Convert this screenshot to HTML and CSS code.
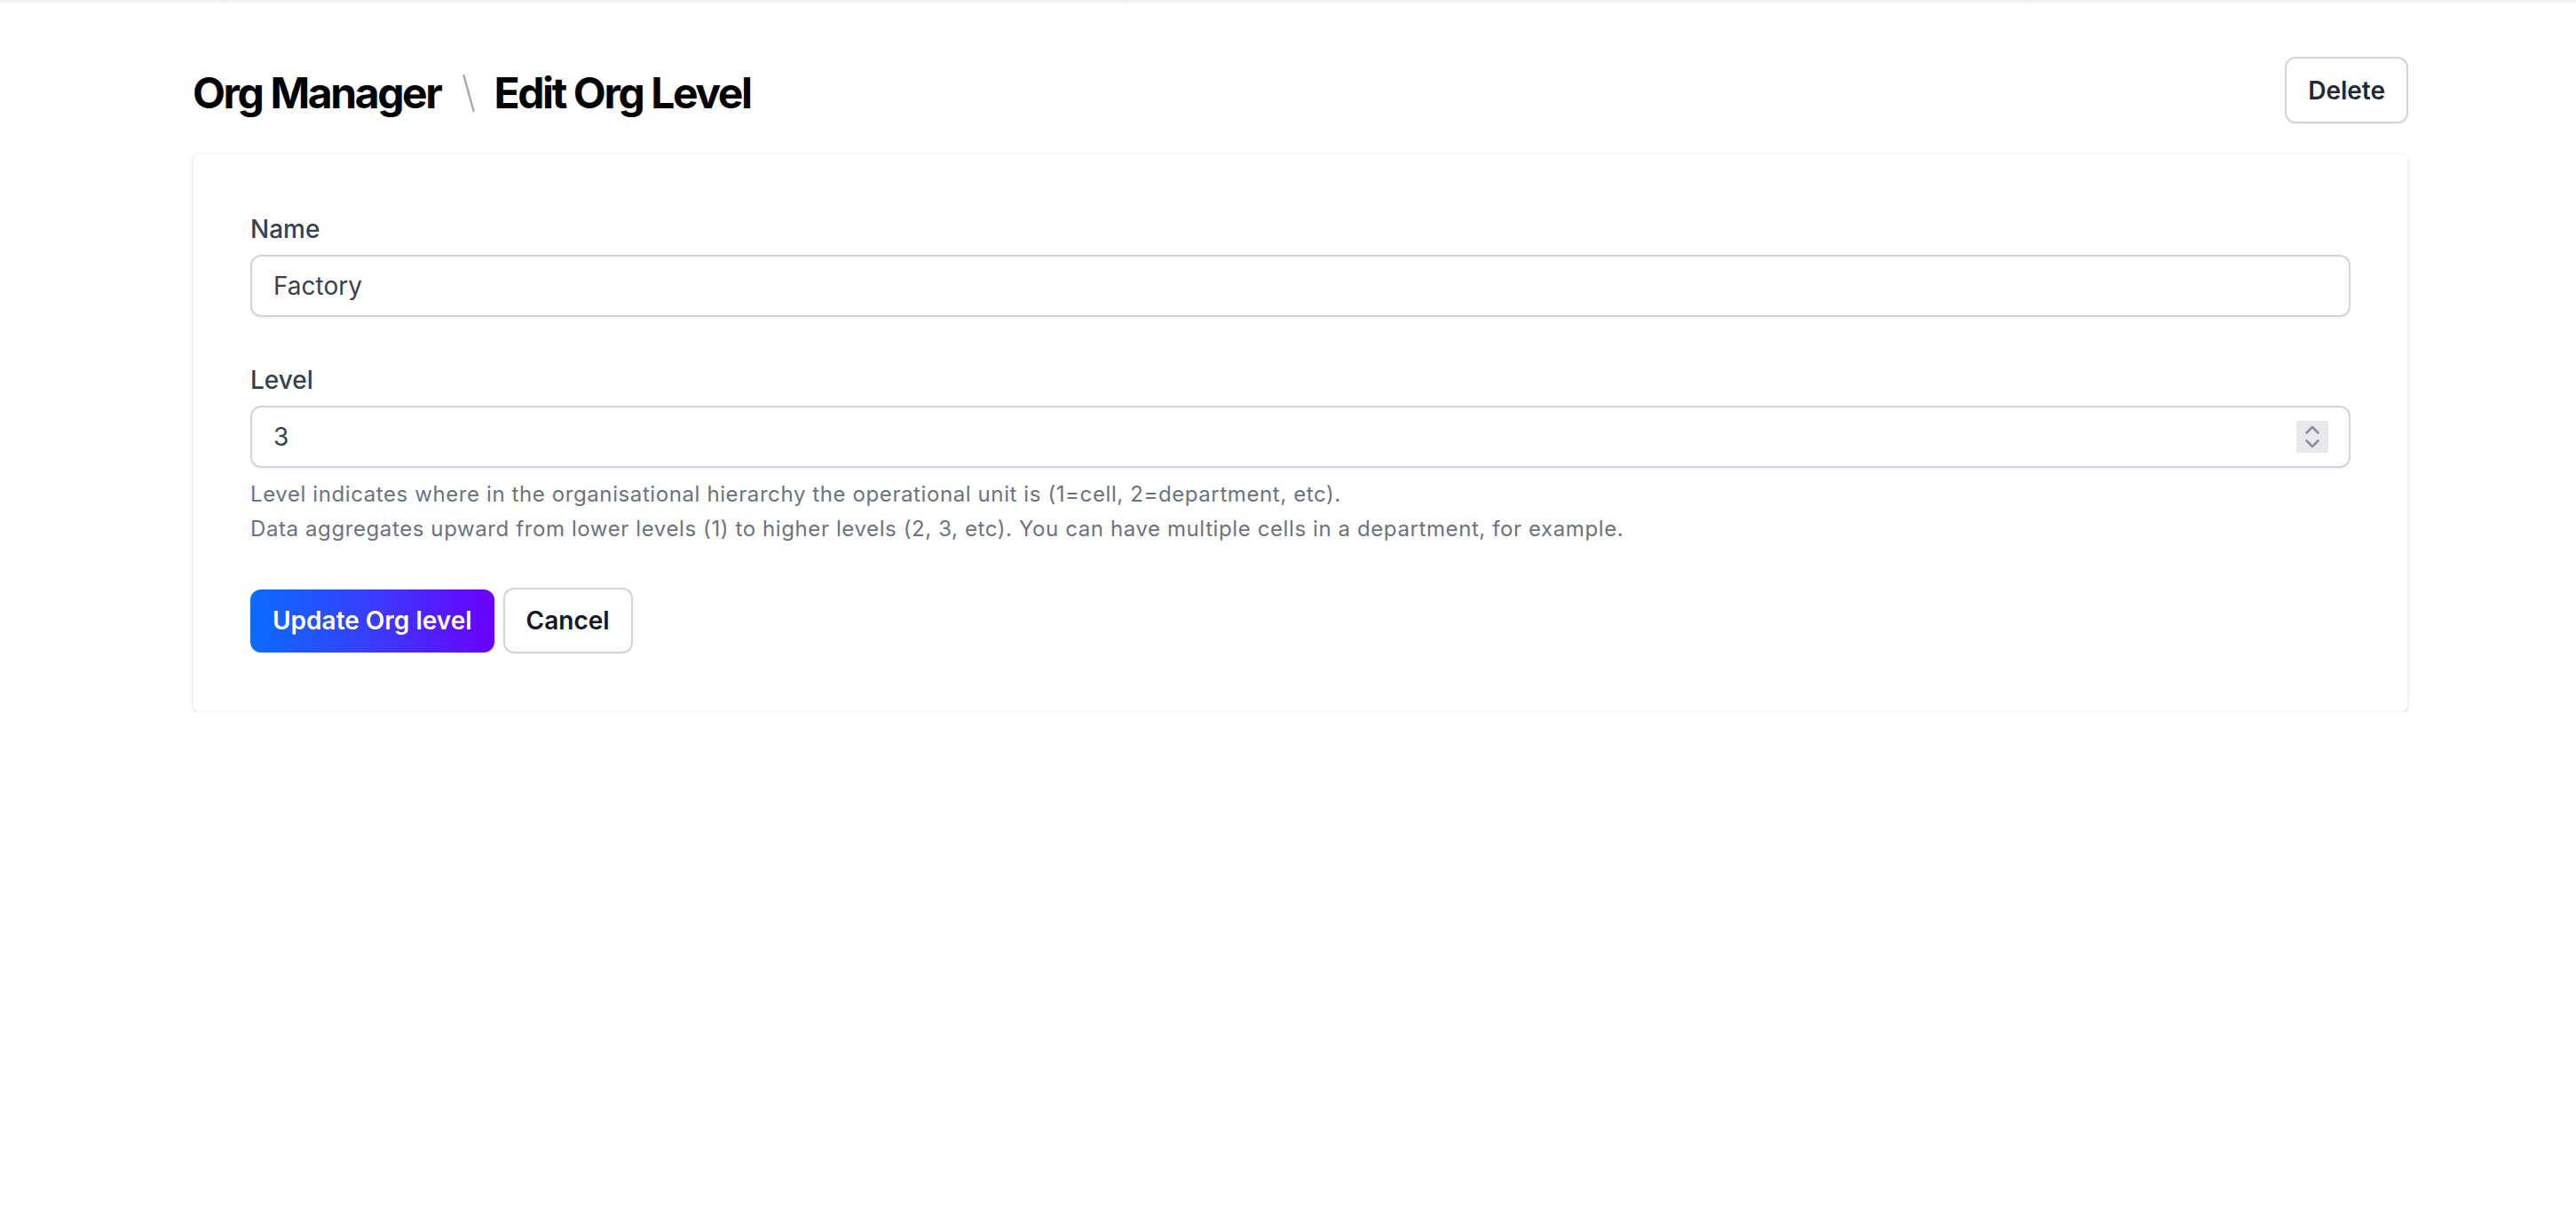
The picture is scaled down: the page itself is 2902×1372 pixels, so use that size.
FILE: index.html
```html
<!DOCTYPE html>
<html lang="en">
<head>
<meta charset="utf-8">
<title>Edit Org Level</title>
<link rel="stylesheet" href="styles.css">
</head>
<body>
<div class="top-shadow"></div>
<main class="page">
  <header class="page-header">
    <h1 class="title">
      <span>Org Manager</span>
      <svg class="sep" width="14" height="42" viewBox="0 0 14 42" aria-hidden="true"><line x1="1.5" y1="1" x2="12.5" y2="41" stroke="#a3a8b4" stroke-width="2.4" stroke-linecap="round"/></svg>
      <span>Edit Org Level</span>
    </h1>
    <button class="btn btn-outline" type="button">Delete</button>
  </header>

  <section class="card">
    <form class="form">
      <div class="field">
        <label class="label" for="name">Name</label>
        <div class="input">
          <input id="name" class="control" type="text" value="Factory">
        </div>
      </div>

      <div class="field">
        <label class="label" for="level">Level</label>
        <div class="input">
          <input id="level" class="control" type="number" value="3">
          <span class="spin" aria-hidden="true">
            <svg width="36" height="36" viewBox="0 0 36 36"><path d="M11.5 13.5 L18 7 L24.5 13.5" fill="none" stroke="#8e8e9a" stroke-width="2.6" stroke-linecap="round" stroke-linejoin="round"/><path d="M11.5 22.5 L18 29 L24.5 22.5" fill="none" stroke="#8e8e9a" stroke-width="2.6" stroke-linecap="round" stroke-linejoin="round"/></svg>
          </span>
        </div>
        <p class="help">Level indicates where in the organisational hierarchy the operational unit is (1=cell, 2=department, etc).<br>Data aggregates upward from lower levels (1) to higher levels (2, 3, etc). You can have multiple cells in a department, for example.</p>
      </div>

      <div class="actions">
        <button class="btn btn-primary" type="button">Update Org level</button>
        <button class="btn btn-outline btn-cancel" type="button">Cancel</button>
      </div>
    </form>
  </section>
</main>
</body>
</html>
```

FILE: styles.css
```css
* { box-sizing: border-box; }

html, body {
  margin: 0;
  padding: 0;
  background: #ffffff;
  font-family: Inter, "Noto Sans", "Liberation Sans", sans-serif;
  -webkit-font-smoothing: antialiased;
}

.top-shadow {
  height: 5px;
  background: linear-gradient(to bottom, #ececee, #f7f7f8 50%, #ffffff);
}

.page {
  width: 2496px;
  margin-left: 217px;
  padding-top: 59px;
}

.page-header {
  display: flex;
  justify-content: space-between;
  align-items: flex-start;
  height: 75px;
}

.title {
  display: flex;
  align-items: center;
  margin: 9px 0 0 0;
  font-size: 48px;
  line-height: 64px;
  font-weight: 700;
  letter-spacing: -2.4px;
  color: #000000;
}

.sep {
  margin: 0 21px 0 25px;
}

.btn {
  font-family: inherit;
  font-size: 28px;
  line-height: 40px;
  font-weight: 600;
  border-radius: 12px;
  cursor: pointer;
}

.btn-outline {
  background: #ffffff;
  color: #1f2937;
  border: 2px solid #d1d5db;
  padding: 15.5px 24px;
  box-shadow: 0 1px 2px rgba(0, 0, 0, 0.04);
}

.btn-cancel {
  padding: 15px 24px;
  color: #111827;
}

.btn-primary {
  border: none;
  color: #ffffff;
  padding: 15.5px 25px;
  background: linear-gradient(to right, #0a6cff 0%, #3a3cfd 50%, #6a00ff 100%);
}

.card {
  margin-top: 33px;
  background: #ffffff;
  border: 1px solid #f2f3f5;
  border-radius: 8px;
  box-shadow: 0 2px 4px rgba(0, 0, 0, 0.08), 0 1px 2px rgba(0, 0, 0, 0.05);
  padding: 65px 64px 65px 64px;
}

.form {
  display: flex;
  flex-direction: column;
}

.field + .field {
  margin-top: 51px;
}

.label {
  display: block;
  font-size: 28px;
  line-height: 40px;
  font-weight: 500;
  color: #374151;
  margin-bottom: 9px;
}

.input {
  display: flex;
  align-items: center;
  height: 70px;
  border: 2px solid #d1d5db;
  border-radius: 12px;
  background: #ffffff;
  box-shadow: 0 2px 2px rgba(0, 0, 0, 0.04);
}

.control {
  flex: 1;
  min-width: 0;
  height: 100%;
  border: none;
  outline: none;
  background: transparent;
  padding: 0 24px;
  font-family: inherit;
  font-size: 28px;
  color: #374151;
  -moz-appearance: textfield;
}

.control::-webkit-inner-spin-button,
.control::-webkit-outer-spin-button {
  -webkit-appearance: none;
  margin: 0;
}

.spin {
  display: flex;
  width: 36px;
  height: 36px;
  margin-right: 23px;
  background: #e9e9ed;
}

.help {
  margin: 10px 0 0 0;
  font-size: 24px;
  line-height: 39px;
  letter-spacing: 0.6px;
  color: #6b7280;
}

.actions {
  display: flex;
  align-items: center;
  gap: 10px;
  margin-top: 47px;
}
```
